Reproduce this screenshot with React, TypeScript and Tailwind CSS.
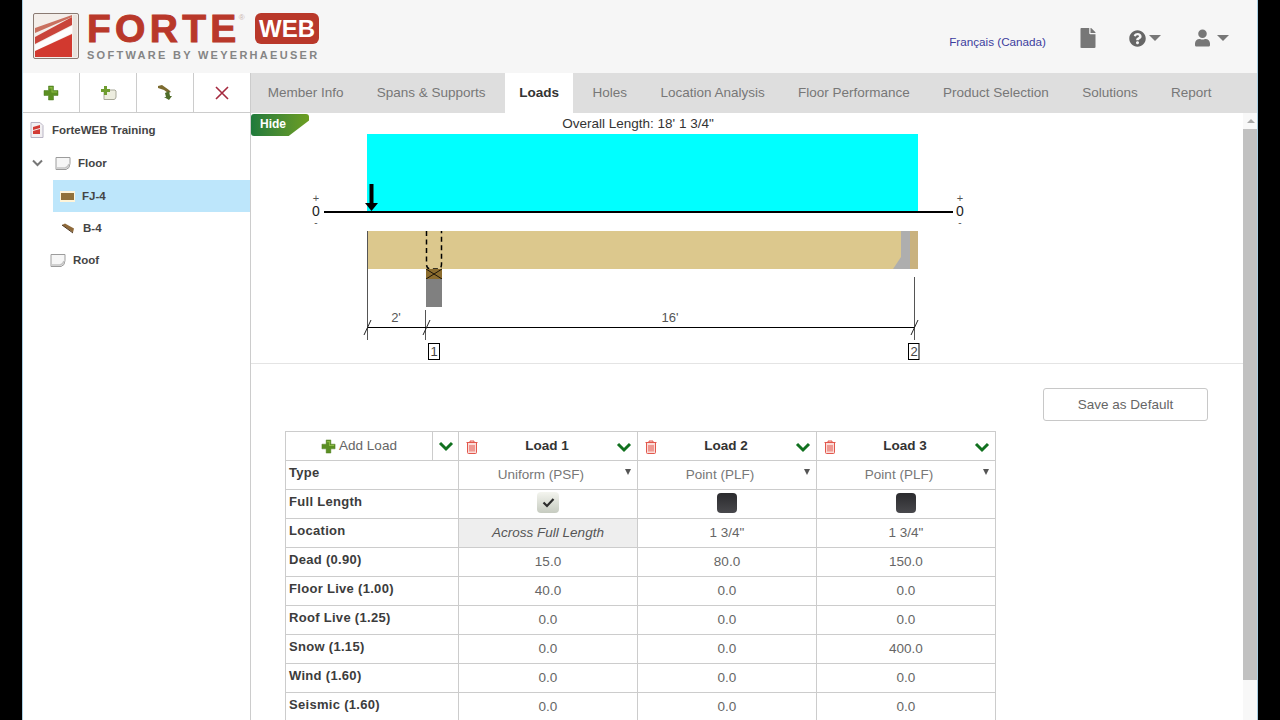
import { FaFile, FaQuestionCircle, FaUser } from 'react-icons/fa'

const font = "font-['Liberation_Sans',Arial,sans-serif]"

const tabs = ['Member Info', 'Spans & Supports', 'Loads', 'Holes', 'Location Analysis', 'Floor Performance', 'Product Selection', 'Solutions', 'Report']

const loads = [
  { name: 'Load 1', type: 'Uniform (PSF)', full: true, location: 'Across Full Length', values: ['15.0', '40.0', '0.0', '0.0', '0.0', '0.0'] },
  { name: 'Load 2', type: 'Point (PLF)', full: false, location: '1 3/4"', values: ['80.0', '0.0', '0.0', '0.0', '0.0', '0.0'] },
  { name: 'Load 3', type: 'Point (PLF)', full: false, location: '1 3/4"', values: ['150.0', '0.0', '0.0', '400.0', '0.0', '0.0'] },
]

const valueRows = ['Dead (0.90)', 'Floor Live (1.00)', 'Roof Live (1.25)', 'Snow (1.15)', 'Wind (1.60)', 'Seismic (1.60)']

const Caret = () => <span className="inline-block w-0 h-0 border-x-[6px] border-x-transparent border-t-[6px] border-t-[#777]" />

const Chevron = () => (
  <svg width="16" height="12" viewBox="0 0 16 12" className="shrink-0">
    <path d="M2 3 L8 9 L14 3" fill="none" stroke="#11711f" strokeWidth="3" />
  </svg>
)

const Plus = ({ size = 16 }: { size?: number }) => (
  <svg width={size} height={size} viewBox="0 0 16 16" className="shrink-0">
    <path d="M5.500 1h5v4.500h4.500v5h-4.500v4.500h-5v-4.500h-4.500v-5h4.500z" fill="#5b8f22" stroke="#4a7a1c" strokeWidth="0.5" />
    <path d="M6.500 2h3v4.500h4.500v1h-5.500v-4h-2z" fill="#8cbb45" />
  </svg>
)

const Trash = () => (
  <svg width="12" height="14" viewBox="0 0 12 14" className="shrink-0">
    <path d="M4 2V1h4v1M0.500 2.500h11M1.500 3v9.500a1 1 0 0 0 1 1h7a1 1 0 0 0 1-1V3" fill="#fbdcd8" stroke="#e2574c" strokeWidth="1" />
    <path d="M4 5v6.500M6 5v6.500M8 5v6.500" stroke="#e2574c" strokeWidth="1" />
  </svg>
)

const PageIcon = ({ className = '' }: { className?: string }) => (
  <svg width="16" height="15" viewBox="0 0 16 15" className={className}>
    <path d="M1 1.500h14v6q0 5-4 6H1z" fill="#f6f6f6" stroke="#9c9c9c" />
    <path d="M2 12h8q3-.5 4-4" fill="none" stroke="#c4c4c4" strokeWidth="1.500" />
  </svg>
)

const Logo = () => (
  <svg width="46" height="46" viewBox="0 0 46 46" className="shrink-0">
    <rect x="0.500" y="0.500" width="45" height="45" rx="1.500" fill="#f3eeea" stroke="#8a7a72" />
    <path d="M2 24 L39 4 V12 L2 31z" fill="#c9443a" />
    <path d="M2 15 L39 2 V4 L2 20z" fill="#c9705f" />
    <path d="M2 32 L39 13 V20 L2 38z" fill="#fdfdfd" />
    <path d="M2 38 L39 21 V44 H2z" fill="#d2392f" />
    <rect x="40" y="2" width="4" height="42" fill="#e8e2dc" />
  </svg>
)

const Diagram = () => (
  <svg viewBox="251 113 992 250" width="992" height="250" className="block">
    <text x="638" y="127.500" textAnchor="middle" fontSize="13.500" fill="#333">Overall Length: 18' 1 3/4"</text>
    <rect x="367" y="134" width="551" height="77" fill="#00ffff" />
    <line x1="324" y1="212" x2="953" y2="212" stroke="#000" strokeWidth="2" />
    <path d="M369.500 184h4v19h4.500l-6.500 8-6.500-8h4.500z" fill="#000" />
    <g fontSize="14" fill="#222" textAnchor="middle">
      <text x="316" y="202" fontSize="11" fill="#555">+</text>
      <text x="316" y="216">0</text>
      <text x="316" y="226" fontSize="10" fill="#555">-</text>
      <text x="960" y="202" fontSize="11" fill="#555">+</text>
      <text x="960" y="216">0</text>
      <text x="960" y="226" fontSize="10" fill="#555">-</text>
    </g>
    <rect x="367" y="231" width="551" height="38" fill="#dcc88d" />
    <rect x="910" y="231" width="8" height="38" fill="#c9b27f" />
    <path d="M901 231h9v38h-17l8-12z" fill="#aeaeae" />
    <path d="M426.500 231v33q0 5 4 5h7q4 0 4-5v-33" fill="none" stroke="#000" strokeWidth="1.500" strokeDasharray="5 3.500" />
    <rect x="426" y="269" width="16" height="10" fill="#8b6c2e" />
    <path d="M426 269l16 10M442 269l-16 10" stroke="#1c1408" strokeWidth="1" />
    <rect x="426" y="279" width="16" height="28" fill="#808080" />
    <g stroke="#555" strokeWidth="1">
      <line x1="367.500" y1="231" x2="367.500" y2="340" />
      <line x1="425.500" y1="310" x2="425.500" y2="340" />
      <line x1="914.500" y1="277" x2="914.500" y2="340" />
    </g>
    <line x1="367" y1="327.500" x2="914" y2="327.500" stroke="#000" strokeWidth="1" />
    <g stroke="#222" strokeWidth="1">
      <line x1="364" y1="335" x2="371" y2="320" />
      <line x1="423" y1="335" x2="430" y2="320" />
      <line x1="911" y1="335" x2="918" y2="320" />
    </g>
    <text x="396" y="322" textAnchor="middle" fontSize="13" fill="#555">2'</text>
    <text x="670" y="322" textAnchor="middle" fontSize="13" fill="#555">16'</text>
    <rect x="428.500" y="343.500" width="11" height="16" fill="#fff" stroke="#000" />
    <text x="434" y="356" textAnchor="middle" fontSize="13" fill="#444">1</text>
    <rect x="908.500" y="343.500" width="10.500" height="16" fill="#fff" stroke="#000" />
    <text x="914" y="356" textAnchor="middle" fontSize="13" fill="#444">2</text>
  </svg>
)

const LabelCell = ({ children }: { children: string }) => (
  <td className="border border-[#ccc] pl-[3px] pb-[4px] text-[13px] font-bold text-[#3c3c3c] h-[29px] align-middle tracking-[0.3px]">{children}</td>
)

const ValueCell = ({ children }: { children: string }) => (
  <td className="border border-[#ccc] text-center text-[13.500px] text-[#666] h-[29px] align-middle">{children}</td>
)

export default function App() {
  return (
    <div className={`w-[1280px] h-[720px] bg-black overflow-hidden ${font}`}>
      <div className="mx-[22px] h-full bg-white border-x border-[#a9cfe3] flex flex-col">
        {/* header */}
        <div className="h-[73px] shrink-0 bg-[#f6f6f6] flex items-start pl-[10px]">
          <div className="mt-[13px] flex">
            <Logo />
            <div className="ml-[8px] w-[232px] h-[46px]">
              <div className="flex items-start justify-between">
                <div className="flex items-start">
                  <span className="text-[39px] leading-[31px] font-bold tracking-[4.300px] text-[#b9382a] [-webkit-text-stroke:1px_#b9382a]">FORTE</span>
                  <span className="text-[8px] leading-[10px] text-[#c9b5b0] -ml-[2px]">®</span>
                </div>
                <span className="bg-[#b9382a] text-white rounded-[6px] h-[31px] w-[64px] text-center text-[24px] leading-[31px] font-bold">WEB</span>
              </div>
              <div className="mt-[6px] text-[11px] leading-[10px] tracking-[2.280px] font-bold text-[#858585] whitespace-nowrap">SOFTWARE BY WEYERHAEUSER</div>
            </div>
          </div>
          <div className="ml-auto flex items-center h-[80px]">
            <span className="text-[11.700px] text-[#3b3d9e] mt-[4px]">Français (Canada)</span>
            <FaFile className="ml-[33px] text-[#777] w-[18px] h-[20px] -mt-[4px]" />
            <FaQuestionCircle className="ml-[32px] text-[#666] w-[17px] h-[17px] -mt-[4px]" />
            <span className="ml-[3px] -mt-[4px] flex"><Caret /></span>
            <FaUser className="ml-[34px] text-[#777] w-[15px] h-[18px] -mt-[4px]" />
            <span className="ml-[7px] mr-[28px] -mt-[4px] flex"><Caret /></span>
          </div>
        </div>

        <div className="flex flex-1 min-h-0">
          {/* sidebar */}
          <div className="w-[228px] shrink-0 border-r border-[#ccc] flex flex-col">
            <div className="h-[40px] shrink-0 flex bg-white border-b border-[#ccc]">
              <div className="w-[57px] border-r border-[#ccc] flex items-center justify-center"><Plus /></div>
              <div className="w-[57px] border-r border-[#ccc] flex items-center justify-center">
                <svg width="17" height="16" viewBox="0 0 17 16">
                  <path d="M4 5h11l1 1v6q0 2-2 2.500H4z" fill="#ededdf" stroke="#a9a99a" />
                  <path d="M4 1h3v3h3v3H7v3H4V7H1V4h3z" fill="#6f9d30" />
                </svg>
              </div>
              <div className="w-[57px] border-r border-[#ccc] flex items-center justify-center">
                <svg width="17" height="17" viewBox="0 0 17 17">
                  <path d="M1 2l4-1 7 5 2 2-3 1-4-3-6-2z" fill="#7c6b2f" />
                  <path d="M12 7l1 5h2l-3 4-5-3h2l-1-4z" fill="#4f6d2a" />
                </svg>
              </div>
              <div className="w-[56px] flex items-center justify-center">
                <svg width="14" height="14" viewBox="0 0 14 14"><path d="M1 1l12 12M13 1L1 13" stroke="#a52a3f" strokeWidth="1.600" /></svg>
              </div>
            </div>
            <div className="pt-[1px] text-[11.500px] font-bold text-[#444]">
              <div className="h-[32px] flex items-center pl-[6px]">
                <svg width="16" height="16" viewBox="0 0 16 16" className="shrink-0">
                  <path d="M2 .500h9l3 3v12H2z" fill="#f2f0f2" stroke="#b9b4c4" />
                  <path d="M4 5l7-2v3l-7 2zM4 9l7-2v5H4z" fill="#d23b35" />
                </svg>
                <span className="ml-[7px] mt-[2px]">ForteWEB Training</span>
              </div>
              <div className="h-[34px] flex items-center pl-[9px]">
                <svg width="11" height="8" viewBox="0 0 11 8" className="shrink-0"><path d="M1 1.500l4.500 4.500 4.500-4.500" fill="none" stroke="#777" strokeWidth="2" /></svg>
                <PageIcon className="ml-[12px]" />
                <span className="ml-[7px] mt-[2px]">Floor</span>
              </div>
              <div className="ml-[30px] h-[32px] bg-[#bde6fb] flex items-center pl-[7px]">
                <span className="w-[15px] h-[11px] bg-[#91713a] border-x border-y-[2px] border-x-[#fff4d8] border-y-[#fff4d8] shrink-0" />
                <span className="ml-[7px] mt-[2px]">FJ-4</span>
              </div>
              <div className="ml-[30px] h-[32px] flex items-center pl-[8px]">
                <svg width="14" height="11" viewBox="0 0 14 11" className="shrink-0">
                  <path d="M1 2l3-1.500 9 5-1 4z" fill="#8f6a3a" />
                  <path d="M1 2l11 8" stroke="#4a3420" strokeWidth="1" />
                </svg>
                <span className="ml-[8px] mt-[2px]">B-4</span>
              </div>
              <div className="h-[32px] flex items-center pl-[27px]">
                <PageIcon />
                <span className="ml-[7px] mt-[2px]">Roof</span>
              </div>
            </div>
          </div>

          {/* main */}
          <div className="flex-1 min-w-0 flex flex-col">
            <div className="h-[40px] shrink-0 bg-[#dedede] flex items-stretch text-[13.500px]">
              {tabs.map(tab => (
                tab === 'Loads'
                  ? <div key={tab} className="mx-[2.500px] px-[14.500px] bg-white font-bold text-[#333] flex items-center">{tab}</div>
                  : <div key={tab} className="px-[16.650px] text-[#777] flex items-center whitespace-nowrap">{tab}</div>
              ))}
            </div>
            <div className="flex-1 min-h-0 flex overflow-hidden">
              <div className="w-[992px] shrink-0 relative">
                <div className="absolute left-0 top-[1px] w-[58px] h-[22px] bg-gradient-to-r from-[#1d7a3b] to-[#6c9e1f] text-white text-[12px] font-bold pl-[9px] leading-[21px] rounded-tl-[3px] rounded-tr-[3px] rounded-bl-[3px] [clip-path:polygon(0_0,100%_0,100%_30%,65%_100%,0_100%)]">Hide</div>
                <div className="border-b border-[#e4e4e4]"><Diagram /></div>
                <div className="flex justify-end pr-[35px] pt-[24px]">
                  <div className="w-[165px] h-[33px] pt-[2px] rounded-[3px] border border-[#c8c8c8] flex items-center justify-center text-[13.500px] text-[#666]">Save as Default</div>
                </div>
                <table className="ml-[34px] mt-[10px] border-collapse table-fixed w-[711px]">
                  <colgroup>
                    <col className="w-[173px]" />
                    <col className="w-[179px]" />
                    <col className="w-[179px]" />
                    <col className="w-[179px]" />
                  </colgroup>
                  <tbody>
                    <tr>
                      <td className="border border-[#ccc] h-[28px] p-0">
                        <div className="flex items-center h-[28px]">
                          <div className="w-[147px] border-r border-[#ccc] h-full pt-[1px] flex items-center justify-center text-[13.500px] text-[#666]">
                            <Plus size={15} />
                            <span className="ml-[3px]">Add Load</span>
                          </div>
                          <div className="flex-1 flex justify-center"><Chevron /></div>
                        </div>
                      </td>
                      {loads.map(load => (
                        <td key={load.name} className="border border-[#ccc] h-[28px] p-0">
                          <div className="flex items-center justify-between pl-[7px] pr-[5px] pt-[1px]">
                            <Trash />
                            <span className="text-[13.500px] font-bold text-[#333]">{load.name}</span>
                            <Chevron />
                          </div>
                        </td>
                      ))}
                    </tr>
                    <tr>
                      <LabelCell>Type</LabelCell>
                      {loads.map(load => (
                        <td key={load.name} className="border border-[#ccc] h-[29px] pr-[14px] text-center text-[13.500px] text-[#777] relative">
                          {load.type}
                          <span className="absolute right-[6px] top-[8px] w-0 h-0 border-x-[3px] border-x-transparent border-t-[6px] border-t-[#555]" />
                        </td>
                      ))}
                    </tr>
                    <tr>
                      <LabelCell>Full Length</LabelCell>
                      {loads.map(load => (
                        <td key={load.name} className="border border-[#ccc] h-[29px] pb-[3px]">
                          {load.full ? (
                            <div className="mx-auto w-[22px] h-[21px] rounded-[4px] bg-gradient-to-b from-[#f4f5ef] to-[#c6cbc0] flex items-center justify-center">
                              <svg width="13" height="11" viewBox="0 0 13 11"><path d="M1.500 5.500l3.500 3.500 6.500-7" fill="none" stroke="#2c2c2c" strokeWidth="2.200" /></svg>
                            </div>
                          ) : (
                            <div className="mx-auto w-[20px] h-[20px] rounded-[4px] bg-gradient-to-b from-[#2b2b2e] to-[#48484c]" />
                          )}
                        </td>
                      ))}
                    </tr>
                    <tr>
                      <LabelCell>Location</LabelCell>
                      {loads.map(load => (
                        load.full
                          ? <td key={load.name} className="border border-[#ccc] h-[29px] text-center text-[13.500px] italic text-[#555] bg-[#eeeeee]">{load.location}</td>
                          : <ValueCell key={load.name}>{load.location}</ValueCell>
                      ))}
                    </tr>
                    {valueRows.map((label, i) => (
                      <tr key={label}>
                        <LabelCell>{label}</LabelCell>
                        {loads.map(load => <ValueCell key={load.name}>{load.values[i]}</ValueCell>)}
                      </tr>
                    ))}
                  </tbody>
                </table>
              </div>
              {/* scrollbar */}
              <div className="w-[15px] shrink-0 flex flex-col items-center bg-[#f8f8f8]">
                <div className="h-[16px] flex items-center justify-center">
                  <span className="w-0 h-0 border-x-[4px] border-x-transparent border-b-[4px] border-b-[#a8a8a8]" />
                </div>
                <div className="w-full h-[551px] bg-[#c1c1c1]" />
              </div>
            </div>
          </div>
        </div>
      </div>
    </div>
  )
}
